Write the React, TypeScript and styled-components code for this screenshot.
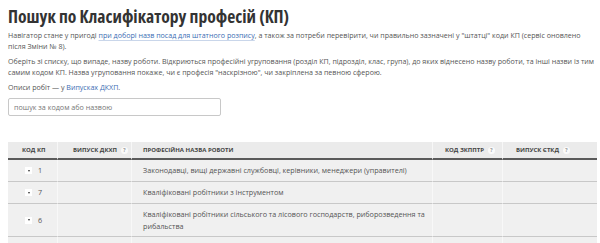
import { Fragment } from 'react';
import styled, { createGlobalStyle } from 'styled-components';

const GlobalStyle = createGlobalStyle`
    body {
        margin: 0;
        background: #fff;
        font-family: "Open Sans", "Liberation Sans", sans-serif;
    }
`;

const Page = styled.div`
    padding: 5px 3px 0 8px;
    color: #555;
`;

const Title = styled.h1`
    margin: 0 0 2.5px;
    font-size: 17.6px;
    line-height: 22px;
    font-weight: 700;
    font-stretch: 87.5%;
    color: #333;
`;

const Para = styled.p`
    margin: 0 0 3px;
    font-size: 7.1px;
    line-height: 11.5px;
    color: #555;
`;

const Link = styled.a`
    color: #3b6db3;
    text-decoration: underline;
    text-decoration-color: #c9d6ea;
    text-underline-offset: 2px;
`;

const PlainLink = styled(Link)`
    text-decoration: none;
`;

const SearchInput = styled.input`
    display: block;
    box-sizing: border-box;
    width: 213px;
    height: 18px;
    margin: 5px 0 26px;
    padding: 0 5px;
    border: 1px solid #c8c8c8;
    border-radius: 2px;
    font-family: inherit;
    font-size: 7.2px;
    color: #555;
    outline: none;
    &::placeholder {
        color: #777;
    }
`;

const Table = styled.div`
    display: grid;
    grid-template-columns: 49px 74px 301px 70px 95px;
    background: #f0f0f0;
`;

const HeadCell = styled.div<{ $pad?: number }>`
    display: flex;
    align-items: center;
    gap: 4px;
    box-sizing: border-box;
    height: 18px;
    padding: 0 0 0 ${(p) => p.$pad ?? 13}px;
    background: #ebebeb;
    border-bottom: 2px solid #5a5a5a;
    border-left: 1px solid #f7f7f7;
    font-size: 6px;
    font-weight: 700;
    color: #444;
    text-transform: uppercase;
    white-space: nowrap;
    &:first-child {
        border-left: none;
    }
`;

const Hint = styled.span`
    display: inline-flex;
    align-items: center;
    justify-content: center;
    width: 7px;
    height: 7px;
    border-radius: 50%;
    background: #fafafa;
    color: #999;
    font-size: 5px;
    font-weight: 700;
`;

const Cell = styled.div<{ $tall?: boolean; $pad?: number }>`
    display: flex;
    align-items: center;
    box-sizing: border-box;
    min-height: ${(p) => (p.$tall ? '33px' : '22px')};
    padding: 0 3px 0 ${(p) => p.$pad ?? 11}px;
    border-bottom: 1px solid #c8c8c8;
    border-left: 1px solid #f8f8f8;
    font-size: 7.2px;
    line-height: 12.5px;
    color: #555;
    &:nth-child(5n + 1) {
        border-left: none;
    }
`;

const Toggle = styled.span`
    display: inline-flex;
    align-items: center;
    justify-content: center;
    width: 7px;
    height: 7px;
    margin-right: 6px;
    background: #fff;
    &::after {
        content: '';
        border-left: 1.5px solid transparent;
        border-right: 1.5px solid transparent;
        border-top: 2px solid #333;
    }
`;

const rows = [
    { code: '1', name: 'Законодавці, вищі державні службовці, керівники, менеджери (управителі)' },
    { code: '7', name: 'Кваліфіковані робітники з інструментом' },
    {
        code: '6',
        name: 'Кваліфіковані робітники сільського та лісового господарств, риборозведення та рибальства',
        tall: true,
    },
    { code: '', name: '' },
];

export default function App() {
    return (
        <Page>
            <GlobalStyle />
            <Title>Пошук по Класифікатору професій (КП)</Title>
            <Para>
                Навігатор стане у пригоді <Link>при доборі назв посад для штатного розпису</Link>, а також за
                потреби перевірити, чи правильно зазначені у "штатці" коди КП (сервіс оновлено після Зміни № 8).
            </Para>
            <Para>
                Оберіть зі списку, що випаде, назву роботи. Відкриються професійні угруповання (розділ КП,
                підрозділ, клас, група), до яких віднесено назву роботи, та інші назви із тим самим кодом КП.
                Назва угруповання покаже, чи є професія "наскрізною", чи закріплена за певною сферою.
            </Para>
            <Para>
                Описи робіт — у <PlainLink>Випусках ДКХП</PlainLink>.
            </Para>
            <SearchInput placeholder="пошук за кодом або назвою" />

            <Table>
                <HeadCell $pad={14}>Код КП</HeadCell>
                <HeadCell $pad={15}>
                    Випуск ДКХП <Hint>?</Hint>
                </HeadCell>
                <HeadCell $pad={11}>Професійна назва роботи</HeadCell>
                <HeadCell $pad={12}>
                    Код ЗКППТР <Hint>?</Hint>
                </HeadCell>
                <HeadCell>
                    Випуск ЄТКД <Hint>?</Hint>
                </HeadCell>

                {rows.map((r, i) => (
                    <Fragment key={i}>
                        <Cell $tall={r.tall} $pad={17}>
                            {r.code && <Toggle />}
                            {r.code}
                        </Cell>
                        <Cell $tall={r.tall} />
                        <Cell $tall={r.tall}>{r.name}</Cell>
                        <Cell $tall={r.tall} />
                        <Cell $tall={r.tall} />
                    </Fragment>
                ))}
            </Table>
        </Page>
    );
}
